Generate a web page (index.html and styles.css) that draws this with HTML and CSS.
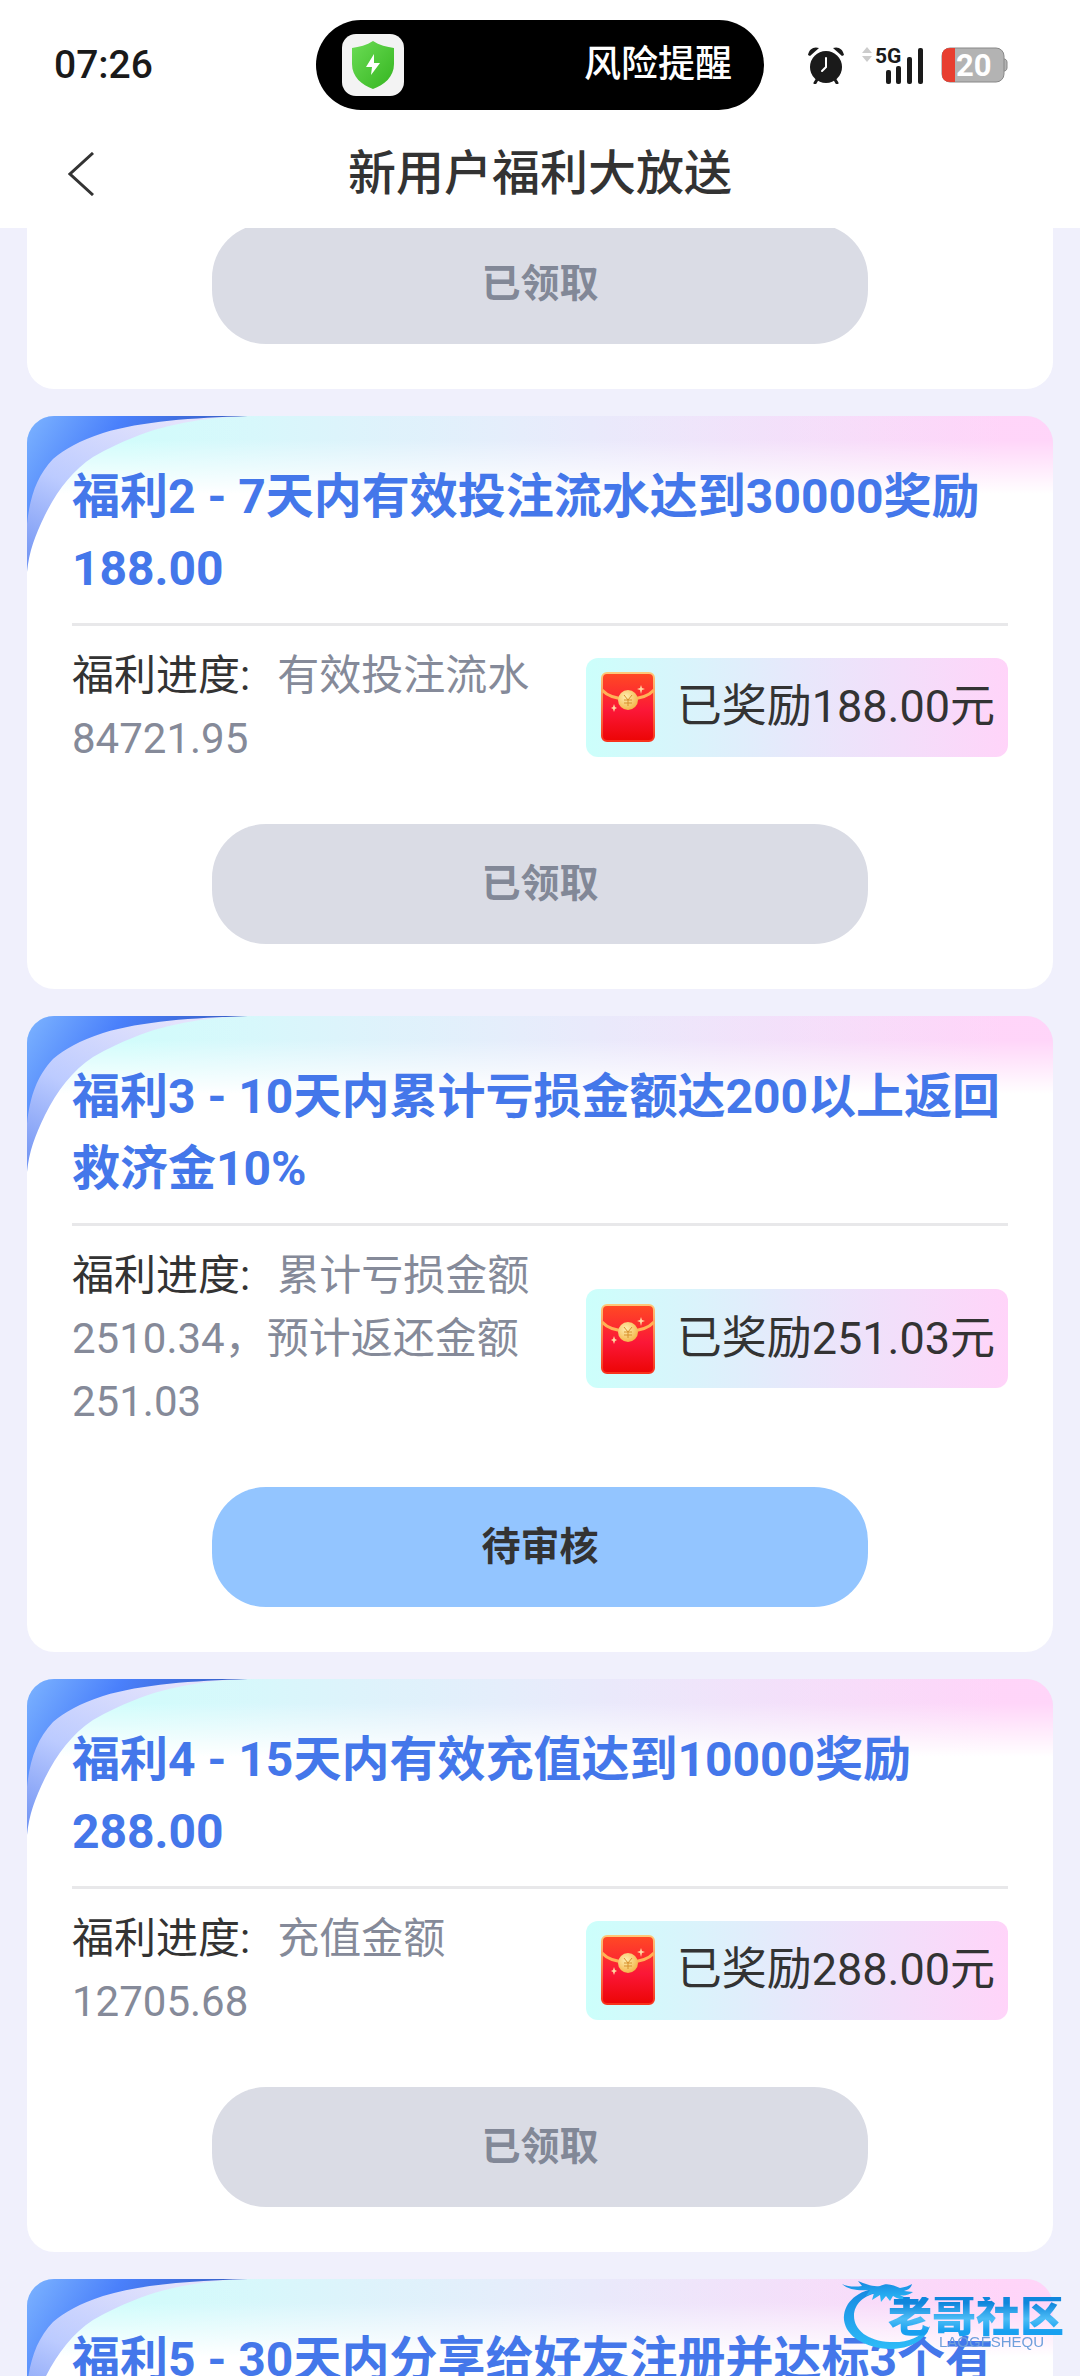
FILE: index.html
```
<!DOCTYPE html>
<html lang="zh-CN">
<head>
    <meta charset="UTF-8">
    <meta name="viewport" content="width=device-width, initial-scale=1.0">
    <title>新用户福利大放送</title>
    <link rel="stylesheet" href="styles.css">
</head>
<body>
    <!-- shared shapes -->
    <svg class="defs" width="0" height="0" aria-hidden="true">
        <defs>
            <linearGradient id="cornerDark" gradientUnits="userSpaceOnUse" x1="0" y1="0" x2="170" y2="110">
                <stop offset="0" stop-color="#7db4ff"/>
                <stop offset="0.4" stop-color="#4a80fb"/>
                <stop offset="1" stop-color="#3156b8"/>
            </linearGradient>
            <linearGradient id="cornerLight" x1="0.6" y1="0" x2="0" y2="1">
                <stop offset="0" stop-color="#e4e3fc"/>
                <stop offset="0.5" stop-color="#bccbff"/>
                <stop offset="1" stop-color="#6c90f2"/>
            </linearGradient>
            <linearGradient id="packetRed" x1="0" y1="0" x2="0" y2="1">
                <stop offset="0" stop-color="#ff4a24"/>
                <stop offset="0.55" stop-color="#fb1737"/>
                <stop offset="1" stop-color="#ec0505"/>
            </linearGradient>
            <linearGradient id="packetEdge" x1="0" y1="0" x2="0" y2="1">
                <stop offset="0" stop-color="#ffc878"/>
                <stop offset="1" stop-color="#f8321c"/>
            </linearGradient>
            <radialGradient id="coin" cx="0.4" cy="0.35" r="0.7">
                <stop offset="0" stop-color="#ffeeb0"/>
                <stop offset="1" stop-color="#f3b243"/>
            </radialGradient>
            <linearGradient id="shield" x1="0" y1="0" x2="1" y2="1">
                <stop offset="0" stop-color="#6bdc55"/>
                <stop offset="1" stop-color="#35b520"/>
            </linearGradient>
            <linearGradient id="dragon" x1="0" y1="0" x2="0" y2="1">
                <stop offset="0" stop-color="#1788e0"/>
                <stop offset="1" stop-color="#2dbcf8"/>
            </linearGradient>
        </defs>
        <symbol id="corner" viewBox="0 0 224 160">
            <path fill="url(#cornerLight)" d="M0 0H221C180 1 145 8 121 16C98 24 80 33 66 41C45 55 30 75 18 99C8 120 2 135 0 156Z"/>
            <path fill="url(#cornerDark)" d="M0 0H221C165 2 115 5 76 17C52 25 38 33 26 43C10 60 3 80 0 108Z"/>
        </symbol>
        <symbol id="packet" viewBox="0 0 54 70">
            <rect x="1" y="1" width="52" height="68" rx="5" fill="url(#packetRed)" stroke="url(#packetEdge)" stroke-width="2"/>
            <path d="M1 18C12 30 42 30 53 18" fill="none" stroke="#ffb257" stroke-width="3"/>
            <circle cx="27" cy="28" r="10" fill="url(#coin)"/>
            <path d="M23 23l4 5 4-5M27 28v6M23 28h8M23 31h8" fill="none" stroke="#d7902c" stroke-width="1"/>
            <path d="M40 13l1 3 3 1-3 1-1 4-1-4-3-1 3-1zM13 32l1 3 2 1-2 1-1 3-1-3-2-1 2-1z" fill="#ffd7a0"/>
        </symbol>
    </svg>

    <header class="header">
        <div class="status-bar">
            <span class="time">07:26</span>
            <div class="island">
                <span class="island-icon">
                    <svg viewBox="0 0 44 48" width="44" height="48">
                        <path fill="url(#shield)" d="M22 0C28 4 36 6 43 7V23C43 36 33 44 22 48C11 44 1 36 1 23V7C8 6 16 4 22 0Z"/>
                        <path fill="#fff" d="M23 13L15 26H21L20 34L29 22H23Z"/>
                    </svg>
                </span>
                <span>风险提醒</span>
            </div>
            <div class="status-icons">
                <svg class="alarm" viewBox="0 0 38 38" width="38" height="38">
                    <g fill="#1a1a1a">
                        <circle cx="19" cy="21" r="16"/>
                        <path d="M1 9C2 3 7 0 12 2L3 10ZM37 9C36 3 31 0 26 2L35 10Z"/>
                    </g>
                    <path d="M11 32L8 37M27 32L30 37" stroke="#1a1a1a" stroke-width="3" stroke-linecap="round"/>
                    <path d="M19 12V21L15 25" fill="none" stroke="#fff" stroke-width="2" stroke-linecap="round"/>
                </svg>
                <svg class="signal" viewBox="0 0 62 38" width="62" height="38">
                    <path fill="#ccc" d="M0 7L5 1L10 7ZM0 10H10L5 16Z"/>
                    <text class="signal-text" x="13" y="17">5G</text>
                    <g fill="#1a1a1a">
                        <rect x="24" y="24" width="5" height="14" rx="2"/>
                        <rect x="34" y="20" width="5" height="18" rx="2"/>
                        <rect x="45" y="11" width="5" height="27" rx="2"/>
                        <rect x="56" y="2" width="5" height="36" rx="2"/>
                    </g>
                </svg>
                <svg class="battery" viewBox="0 0 67 36" width="67" height="36">
                    <path d="M62 12H64Q66 13 66 15V21Q66 23 64 24H62Z" fill="#b3b3b3" stroke="#888"/>
                    <rect x="1" y="1" width="62" height="34" rx="8" fill="#b3b3b3" stroke="#888"/>
                    <path d="M14 1H9Q1 1 1 9V27Q1 35 9 35H14Z" fill="#e83e30"/>
                    <text class="battery-text" x="15" y="29">20</text>
                </svg>
            </div>
        </div>
        <nav class="nav">
            <a class="back" href="#" aria-label="返回">
                <svg viewBox="0 0 26 44" width="26" height="44">
                    <path d="M25 1L2 22L25 43" fill="none" stroke="#333" stroke-width="3"/>
                </svg>
            </a>
            <h1>新用户福利大放送</h1>
        </nav>
    </header>

    <main class="list">
        <section class="card card-cut">
            <button class="btn" disabled>已领取</button>
        </section>

        <section class="card">
            <svg class="corner" width="224" height="160"><use href="#corner"/></svg>
            <h2>福利2 - 7天内有效投注流水达到30000奖励188.00</h2>
            <div class="info">
                <p class="progress"><span class="label">福利进度:</span>有效投注流水 84721.95</p>
                <div class="reward">
                    <svg width="54" height="70"><use href="#packet"/></svg>
                    <span>已奖励188.00元</span>
                </div>
            </div>
            <button class="btn" disabled>已领取</button>
        </section>

        <section class="card">
            <svg class="corner" width="224" height="160"><use href="#corner"/></svg>
            <h2>福利3 - 10天内累计亏损金额达200以上返回救济金10%</h2>
            <div class="info">
                <p class="progress"><span class="label">福利进度:</span>累计亏损金额2510.34，预计返还金额251.03</p>
                <div class="reward">
                    <svg width="54" height="70"><use href="#packet"/></svg>
                    <span>已奖励251.03元</span>
                </div>
            </div>
            <button class="btn btn-pending">待审核</button>
        </section>

        <section class="card">
            <svg class="corner" width="224" height="160"><use href="#corner"/></svg>
            <h2>福利4 - 15天内有效充值达到10000奖励288.00</h2>
            <div class="info">
                <p class="progress"><span class="label">福利进度:</span>充值金额 12705.68</p>
                <div class="reward">
                    <svg width="54" height="70"><use href="#packet"/></svg>
                    <span>已奖励288.00元</span>
                </div>
            </div>
            <button class="btn" disabled>已领取</button>
        </section>

        <section class="card">
            <svg class="corner" width="224" height="160"><use href="#corner"/></svg>
            <h2>福利5 - 30天内分享给好友注册并达标3个有</h2>
        </section>
    </main>

    <div class="watermark">
        <svg class="dragon" viewBox="0 0 92 72" width="92" height="72">
            <g fill="url(#dragon)">
                <path d="M36 8C14 12 3 25 4 40C6 57 26 68 50 69C70 69 86 60 90 46C80 58 66 63 50 62C28 61 14 50 14 36C14 24 24 15 38 13Z"/>
                <path d="M2 4C8 7 16 7 22 6L18 1C26 4 32 7 40 6C48 2 54 6 60 8C65 7 69 6 72 4C71 8 68 10 64 11L73 12C69 15 64 16 60 15L70 20C64 21 58 19 53 16L50 21L46 16L41 22L40 15L32 20L34 13L26 16L30 10C20 11 8 10 2 4Z"/>
            </g>
        </svg>
        <div class="watermark-text">
            <strong>老哥社区</strong>
            <small>LAOGESHEQU</small>
        </div>
    </div>
</body>
</html>
```

FILE: styles.css
```
* {
    box-sizing: border-box;
}
body {
    margin: 0;
    height: 100vh;
    display: flex;
    flex-direction: column;
    overflow: hidden;
    background-color: #f0f0fc;
    color: #333;
    font-family: Roboto, "Noto Sans CJK SC", sans-serif;
}
h1, h2, p {
    margin: 0;
}
svg {
    display: block;
    flex-shrink: 0;
}
.defs {
    position: absolute;
}

/* header */
.header {
    position: relative;
    z-index: 1;
    flex-shrink: 0;
    background-color: #fff;
}
.status-bar {
    display: grid;
    grid-template-columns: 1fr 448px 1fr;
    align-items: center;
    height: 120px;
    padding-top: 10px;
    line-height: 48px;
}
.time {
    padding-left: 54px;
    color: #1a1a1a;
    font-size: 39px;
    font-weight: 500;
}
.island {
    display: flex;
    align-items: center;
    justify-content: space-between;
    height: 90px;
    padding: 0 32px 0 26px;
    border-radius: 45px;
    background-color: #000;
    color: #fff;
    font-size: 37px;
    font-weight: 500;
}
.island-icon {
    display: flex;
    align-items: center;
    justify-content: center;
    width: 62px;
    height: 62px;
    border-radius: 14px;
    background-color: #f3f3f3;
}
.status-icons {
    display: flex;
    align-items: center;
    gap: 17px;
    padding-left: 43px;
}
.signal-text {
    font-size: 21px;
    font-weight: 700;
    fill: #1a1a1a;
}
.battery-text {
    font-size: 31px;
    font-weight: 700;
    fill: #fff;
}
.nav {
    display: grid;
    grid-template-columns: 140px 1fr 140px;
    align-items: center;
    height: 108px;
}
.nav h1 {
    grid-column: 2;
    font-size: 48px;
    font-weight: 500;
    line-height: 72px;
    text-align: center;
}
.back {
    justify-self: start;
    padding: 12px 20px 12px 68px;
}

/* cards */
.list {
    flex: 1;
    min-height: 0;
    overflow: hidden;
    padding: 0 27px;
}
.card {
    position: relative;
    overflow: hidden;
    margin-bottom: 27px;
    padding: 45px;
    border-radius: 27px;
    background:
        linear-gradient(to bottom, rgba(255,255,255,0.1) 24px, #fff 78px),
        linear-gradient(to right, #ccfcfb 10%, #e7e8fb 55%, #ffd0f8 95%);
}
/* first card is scrolled under the header */
.card-cut {
    margin-top: -4px;
    padding-top: 0;
    border-radius: 0 0 27px 27px;
    background: #fff;
}
.corner {
    position: absolute;
    top: 0;
    left: 0;
}
.card h2 {
    position: relative;
    padding-bottom: 18px;
    border-bottom: 3px solid #e8e8ea;
    color: #4477ea;
    font-size: 48px;
    font-weight: 700;
    line-height: 72px;
}
.info {
    display: flex;
    align-items: center;
    gap: 27px;
    padding: 18px 0 54px;
}
.progress {
    flex: 1;
    color: #858a99;
    font-size: 42px;
    line-height: 63px;
}
.label {
    margin-right: 27px;
    color: #333;
}
.reward {
    display: flex;
    align-items: center;
    gap: 22px;
    height: 99px;
    padding: 0 13px 0 15px;
    border-radius: 12px;
    background: linear-gradient(to right, #ccfffb, #e7e8fb 50%, #ffd4f9);
    font-size: 45px;
    line-height: 66px;
    white-space: nowrap;
}
.btn {
    display: block;
    width: 70%;
    height: 120px;
    margin: 0 auto;
    padding: 0;
    border: none;
    border-radius: 54px;
    background-color: #dadce5;
    color: #828897;
    font-family: inherit;
    font-size: 39px;
    font-weight: 700;
    line-height: 60px;
}
.btn-pending {
    background-color: #93c5ff;
    color: #333;
    cursor: pointer;
}

/* site watermark */
.watermark {
    position: fixed;
    right: 16px;
    bottom: 24px;
    display: flex;
    pointer-events: none;
}
.dragon {
    margin-right: -44px;
}
.watermark-text {
    padding-top: 17px;
    text-align: right;
}
.watermark-text strong {
    display: block;
    background: linear-gradient(to bottom, #0f86dc 15%, #4dbdf6 55%, #18a0f0 85%);
    -webkit-background-clip: text;
    background-clip: text;
    color: transparent;
    font-size: 44px;
    font-weight: 900;
    line-height: 40px;
}
.watermark-text small {
    display: block;
    padding-right: 20px;
    color: #6f9fdc;
    font-family: "Liberation Sans", sans-serif;
    font-size: 15px;
    line-height: 9px;
}
```
